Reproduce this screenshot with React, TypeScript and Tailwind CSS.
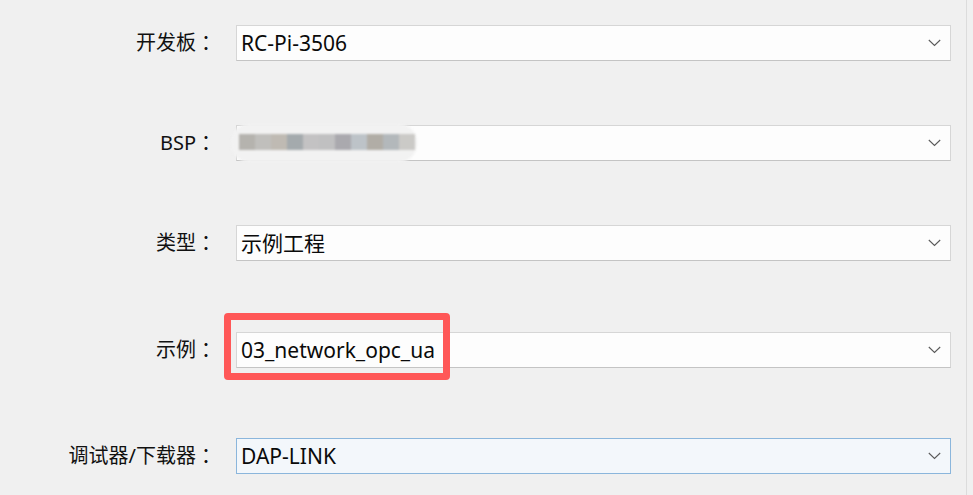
import React from "react";

const FONT = '"Noto Sans", "Noto Sans CJK SC", sans-serif';

function Chevron() {
  return (
    <svg width="13" height="8" viewBox="0 0 13 8" className="absolute right-[9px] top-1/2 -translate-y-1/2" fill="none">
      <path d="M0.8 1 L6.5 6.5 L12.2 1" stroke="#5a5a5a" strokeWidth="1.1" />
    </svg>
  );
}

function Row({
  label,
  children,
  className,
  active,
  extra,
}: {
  label: string;
  children?: React.ReactNode;
  className: string;
  active?: boolean;
  extra?: React.ReactNode;
}) {
  return (
    <div className={`flex h-[36px] items-center ${className}`}>
      <div className="flex h-[36px] w-[216px] items-center justify-end text-[20px] leading-none text-[#111]">
        <span>{label}</span>
        <span style={{ fontFamily: '"Noto Sans CJK TC", sans-serif' }}>：</span>
      </div>
      <div
        className={`relative ml-[20px] h-[36px] w-[715px] border ${
          active ? "border-[#8bb6dc] bg-[#f3f7fb]" : "border-[#d6d6d6] border-b-[#c4c4c4] bg-[#fdfdfd]"
        }`}
      >
        <div className="pl-[4px] text-[21px] leading-[34px] text-[#0a0a0a]">{children}</div>
        <Chevron />
        {extra}
      </div>
    </div>
  );
}

const mosaic = [
  "#b5b3ae",
  "#c0bfbc",
  "#bfbab3",
  "#a4aaad",
  "#c3c2c3",
  "#c0c0c1",
  "#aaa9ae",
  "#bdc3c8",
  "#b1ada6",
  "#b3b8bb",
  "#cbcac7",
];

export default function App() {
  return (
    <div className="relative h-[495px] w-[973px] overflow-hidden bg-[#f0f0f0]" style={{ fontFamily: FONT }}>
      <div className="absolute right-[6px] top-0 h-full w-px bg-[#dcdcdc]" />
      <div className="flex flex-col">
        <Row label="开发板" className="mt-[25px]">RC-Pi-3506</Row>
        <Row
          label="BSP"
          className="mt-[64px]"
          extra={
            <div className="absolute left-[-6px] top-[-2px] h-[38px] w-[186px] overflow-hidden rounded-[18px] bg-[#f2f2f2] blur-[1px]">
              <div className="absolute left-[8px] top-[10px] flex">
                {mosaic.map((c, i) => (
                  <div key={i} className="h-[16px] w-[16px]" style={{ backgroundColor: c }} />
                ))}
              </div>
            </div>
          }
        />
        <Row label="类型" className="mt-[64px]">示例工程</Row>
        <Row
          label="示例"
          className="mt-[71px]"
          extra={
            <div className="absolute left-[-13px] top-[-20px] h-[67px] w-[226px] rounded-[4px] border-[7px] border-[#ff5757]" />
          }
        >
          03_network_opc_ua
        </Row>
        <Row label="调试器/下载器" className="mt-[70px]" active>
          DAP-LINK
        </Row>
      </div>
    </div>
  );
}
